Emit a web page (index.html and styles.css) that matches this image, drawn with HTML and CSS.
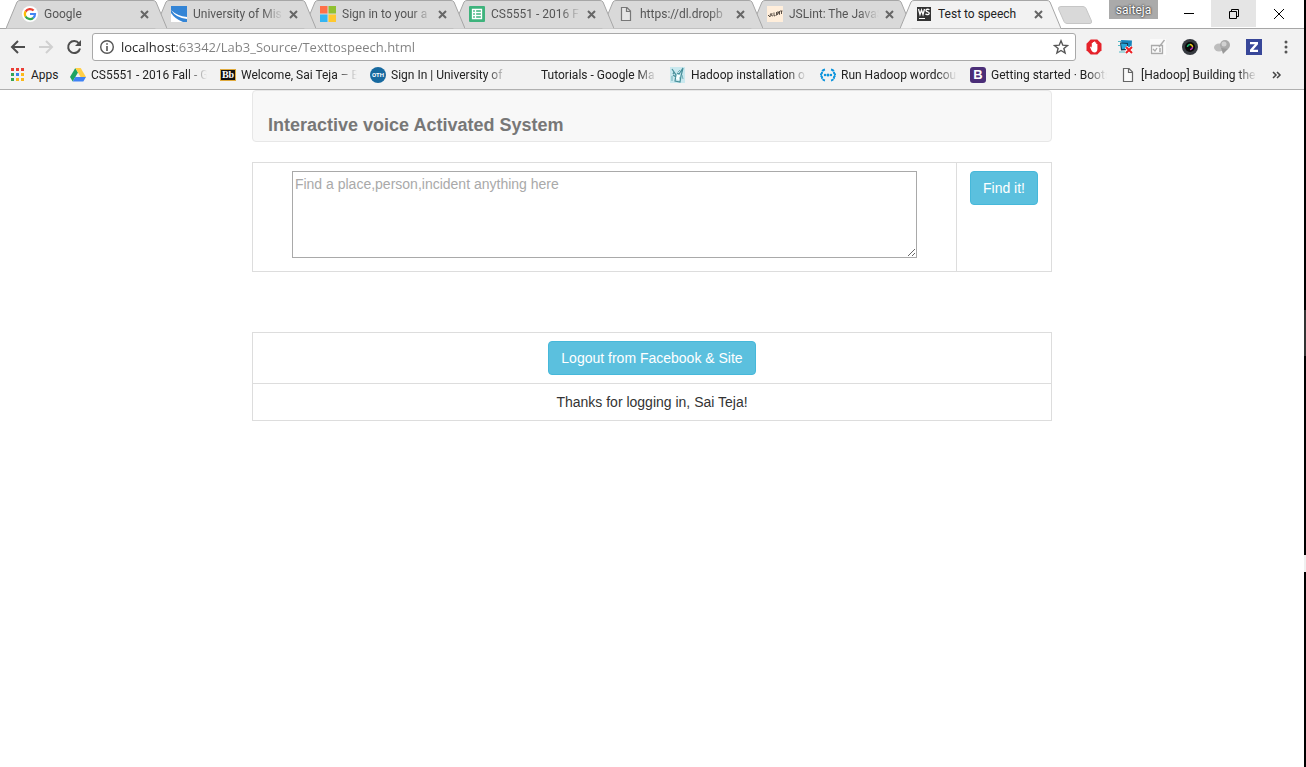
FILE: index.html
```
<!DOCTYPE html>
<html lang="en">
<head>
<meta charset="utf-8">
<title>Test to speech</title>
<link rel="stylesheet" href="styles.css">
</head>
<body>
<div class="window">
<header class="chrome">
  <div class="tabstrip">
    <nav class="tabs" aria-label="Tabs">
      <div class="tab">
        <svg class="tab-shape" viewBox="0 0 161 29" preserveAspectRatio="none"><path d="M0 28.5 L11 2 Q12 .5 14 .5 H147 Q149 .5 150 2 L161 28.5"/></svg>
        <svg class="icon" viewBox="0 0 16 16"><circle cx="8" cy="8" r="8" fill="#fff"/><g fill="none" stroke-width="2.2"><path d="M3.6 5.6A5 5 0 0 1 11.6 4.6" stroke="#ea4335"/><path d="M3.6 5.4A5 5 0 0 0 3.6 10.6" stroke="#fbbc05"/><path d="M3.6 10.4A5 5 0 0 0 11.3 11.8" stroke="#34a853"/><path d="M8 8H13A5 5 0 0 1 11.2 11.9" stroke="#4285f4"/></g></svg>
        <a class="tab-title" href="#">Google</a>
        <button class="tab-close" aria-label="Close Google"><svg viewBox="0 0 9 9"><path d="M1 1L8 8M8 1L1 8"/></svg></button>
      </div>
      <div class="tab">
        <svg class="tab-shape" viewBox="0 0 161 29" preserveAspectRatio="none"><path d="M0 28.5 L11 2 Q12 .5 14 .5 H147 Q149 .5 150 2 L161 28.5"/></svg>
        <svg class="icon" viewBox="0 0 16 16"><path d="M0 0H16V16H0z" fill="#3485d6"/><path d="M0 4Q6 10 16 11V13Q5 12 0 4z" fill="#fff"/><path d="M0 7Q4 13 12 16H0z" fill="#fff"/></svg>
        <a class="tab-title" href="#">University of Mis</a>
        <button class="tab-close" aria-label="Close University of Missouri"><svg viewBox="0 0 9 9"><path d="M1 1L8 8M8 1L1 8"/></svg></button>
      </div>
      <div class="tab">
        <svg class="tab-shape" viewBox="0 0 161 29" preserveAspectRatio="none"><path d="M0 28.5 L11 2 Q12 .5 14 .5 H147 Q149 .5 150 2 L161 28.5"/></svg>
        <svg class="icon" viewBox="0 0 16 16"><path d="M0 0H7.5V7.5H0z" fill="#ff7048"/><path d="M8.5 0H16V7.5H8.5z" fill="#91c130"/><path d="M0 8.500H7.5V16H0z" fill="#34b5f2"/><path d="M8.500 8.500H16V16H8.500z" fill="#ffc82e"/></svg>
        <a class="tab-title" href="#">Sign in to your a</a>
        <button class="tab-close" aria-label="Close Sign in"><svg viewBox="0 0 9 9"><path d="M1 1L8 8M8 1L1 8"/></svg></button>
      </div>
      <div class="tab">
        <svg class="tab-shape" viewBox="0 0 161 29" preserveAspectRatio="none"><path d="M0 28.5 L11 2 Q12 .5 14 .5 H147 Q149 .5 150 2 L161 28.5"/></svg>
        <svg class="icon" viewBox="0 0 16 16"><rect width="16" height="16" rx="1" fill="#3eb37c"/><path d="M3.500 3.500H12.500V12.500H3.500zM3.500 6.500H12.500M3.500 9.500H12.500M6.500 3.500V12.500" fill="none" stroke="#fff" stroke-width="1.300"/></svg>
        <a class="tab-title" href="#">CS5551 - 2016 F</a>
        <button class="tab-close" aria-label="Close CS5551"><svg viewBox="0 0 9 9"><path d="M1 1L8 8M8 1L1 8"/></svg></button>
      </div>
      <div class="tab">
        <svg class="tab-shape" viewBox="0 0 161 29" preserveAspectRatio="none"><path d="M0 28.5 L11 2 Q12 .5 14 .5 H147 Q149 .5 150 2 L161 28.5"/></svg>
        <svg class="icon" viewBox="0 0 16 16"><path d="M3.500 1.500H9L12.500 5V14.500H3.500zM8.500 1.500V5.500H12.500" fill="#e6e6e6" stroke="#777" stroke-width="1.200"/></svg>
        <a class="tab-title" href="#">https://dl.dropb</a>
        <button class="tab-close" aria-label="Close dropbox"><svg viewBox="0 0 9 9"><path d="M1 1L8 8M8 1L1 8"/></svg></button>
      </div>
      <div class="tab">
        <svg class="tab-shape" viewBox="0 0 161 29" preserveAspectRatio="none"><path d="M0 28.5 L11 2 Q12 .5 14 .5 H147 Q149 .5 150 2 L161 28.5"/></svg>
        <svg class="icon" viewBox="0 0 16 16"><path d="M0 0H16V16H0z" fill="#ffeedb"/><path d="M1 9L3 11L3.500 7.500M5 7L4.500 9.500L6 10M7 6.500V10L8.500 9.500M9.500 6V9.500M10.500 9L11 5.500L12.500 8.500V5M13 5H15.500M14.500 5V8" fill="none" stroke="#4a4038" stroke-width=".9"/></svg>
        <a class="tab-title" href="#">JSLint: The JavaS</a>
        <button class="tab-close" aria-label="Close JSLint"><svg viewBox="0 0 9 9"><path d="M1 1L8 8M8 1L1 8"/></svg></button>
      </div>
      <div class="tab tab-active">
        <svg class="tab-shape" viewBox="0 0 161 29" preserveAspectRatio="none"><path d="M0 28.5 L11 2 Q12 .5 14 .5 H147 Q149 .5 150 2 L161 28.5"/></svg>
        <svg class="icon" viewBox="0 0 16 16"><path d="M1 1H15V15H1z" fill="#343434"/><path d="M2.500 3L4 8.500L5.500 4L7 8.500L8.500 3M13.300 4Q12.800 3.200 11.500 3.200Q9.900 3.300 10 4.500Q10.200 5.500 11.700 5.800Q13.400 6.200 13.200 7.500Q12.800 8.700 11.300 8.600Q10 8.500 9.600 7.700" fill="none" stroke="#fff" stroke-width="1.300"/><path d="M3 12H9V13H3z" fill="#fff"/></svg>
        <a class="tab-title" href="#">Test to speech</a>
        <button class="tab-close" aria-label="Close Test to speech"><svg viewBox="0 0 9 9"><path d="M1 1L8 8M8 1L1 8"/></svg></button>
      </div>
    </nav>
    <button class="new-tab" aria-label="New tab"><svg viewBox="0 0 36 18"><path d="M4 .500H26Q28 .500 29 2.500L34.500 15Q35 17.500 33 17.500H10Q8 17.500 7 15.500L1.500 3Q1 .500 4 .500z" fill="#d9d9d9" stroke="#c6c6c6"/></svg></button>
    <div class="window-buttons">
      <button class="profile">saiteja</button>
      <button class="win-btn" aria-label="Minimize"><svg viewBox="0 0 12 12"><path d="M1 5.500H11"/></svg></button>
      <button class="win-btn win-hover" aria-label="Restore"><svg viewBox="0 0 12 12"><path d="M1.500 3.500H8.500V10.500H1.500zM3.500 3.500V1.500H10.500V8.500H8.500"/></svg></button>
      <button class="win-btn" aria-label="Close"><svg viewBox="0 0 12 12"><path d="M1 1L11 11M11 1L1 11"/></svg></button>
    </div>
  </div>

  <div class="toolbar">
    <button class="tool" aria-label="Back"><svg viewBox="0 0 16 16"><path d="M15 8H2.500M8 2L2 8L8 14" fill="none" stroke="#4d4d4d" stroke-width="2"/></svg></button>
    <button class="tool" aria-label="Forward"><svg viewBox="0 0 16 16"><path d="M1 8H13.500M8 2L14 8L8 14" fill="none" stroke="#d0d0d0" stroke-width="2"/></svg></button>
    <button class="tool" aria-label="Reload"><svg viewBox="0 0 16 16"><path d="M13 4.500A6 6 0 1 0 14 9.500" fill="none" stroke="#4d4d4d" stroke-width="2"/><path d="M15 1V7H9z" fill="#4d4d4d"/></svg></button>
    <div class="omnibox">
      <svg class="icon" viewBox="0 0 16 16"><circle cx="8" cy="8" r="6.300" fill="none" stroke="#555" stroke-width="1.400"/><path d="M7.200 7H8.800V12H7.200zM7.200 4.200H8.800V5.800H7.200z" fill="#555"/></svg>
      <input class="address" type="text" aria-label="Address" value="localhost:63342/Lab3_Source/Texttospeech.html">
      <button class="star" aria-label="Bookmark this page"><svg class="icon" viewBox="0 0 16 16"><path d="M8 1.800L9.800 6.200L14.500 6.500L10.900 9.500L12.100 14L8 11.500L3.900 14L5.100 9.500L1.500 6.500L6.200 6.200z" fill="none" stroke="#555" stroke-width="1.400"/></svg></button>
    </div>
    <div class="extensions">
      <button class="ext" aria-label="AdBlock"><svg viewBox="0 0 16 16"><path d="M4.700 .5H11.300L15.500 4.700V11.300L11.300 15.500H4.700L.5 11.300V4.700z" fill="#e5222a"/><path d="M4 8L5.200 7.500L5.800 9V4H6.800V7V3H8V7V2.500H9.200V7V3.500H10.300V7.500V5H11.400V10Q11.300 13.300 8.500 13.500Q6.500 13.300 5.500 11.500z" fill="#fff"/></svg></button>
      <button class="ext" aria-label="Connection"><svg viewBox="0 0 16 16"><path d="M3 1L14 1.500L13.500 9L4 10z" fill="#1684bd"/><path d="M2 3.500L10 4L10 11L3 11.500z" fill="#113e59"/><path d="M3 4.500L9 5L9 9.500L4 10z" fill="#27a7dc"/><path d="M0 2.500H3M0 6.500H2M1 13H8" stroke="#52bac6"/><path d="M8 8L14 14M14 8L8 14" stroke="#fff" stroke-width="3.500"/><path d="M8 8L14 14M14 8L8 14" stroke="#ec2024" stroke-width="2"/></svg></button>
      <button class="ext" aria-label="Form editor"><svg viewBox="0 0 16 16"><path d="M0 0H16V16H0z" fill="#fafafa"/><path d="M1.500 6.500H12.500V14.500H1.500zM3 10L5 12L7 9M9 10H11M9 12H11M14.500 1L9 8" fill="none" stroke="#aaa" stroke-width="1.300"/></svg></button>
      <button class="ext" aria-label="Camera"><svg viewBox="0 0 16 16"><circle cx="8" cy="8" r="8" fill="#363a40"/><circle cx="8" cy="8" r="5" fill="#080808"/><g fill="none" stroke-width="1.500"><path d="M5.500 8A2.500 2.500 0 0 1 8 5.500" stroke="#1bb66d"/><path d="M8 5.500A2.500 2.500 0 0 1 10.500 8" stroke="#eacb21"/><path d="M10.500 8A2.500 2.500 0 0 1 8 10.500" stroke="#c237b5"/></g></svg></button>
      <button class="ext" aria-label="Cloud"><svg viewBox="0 0 16 16"><ellipse cx="5" cy="8.500" rx="5" ry="4" fill="#bdbdbd"/><circle cx="11" cy="6" r="5" fill="#aaa"/><path d="M7 9L14 10L9 15z" fill="#999"/><circle cx="10" cy="5" r="2.500" fill="#d1d1d1"/></svg></button>
      <button class="ext" aria-label="Zotero"><svg viewBox="0 0 16 16"><path d="M0 0H16V16H0z" fill="#384799"/><path d="M4 3H12V5.300L7.200 10.700H12V13H4V10.800L8.900 5.300H4z" fill="#fff"/></svg></button>
      <button class="ext" aria-label="Menu"><svg viewBox="0 0 16 16" fill="#555"><circle cx="8" cy="3" r="1.500"/><circle cx="8" cy="8" r="1.500"/><circle cx="8" cy="13" r="1.500"/></svg></button>
    </div>
  </div>

  <nav class="bookmarks" aria-label="Bookmarks">
    <a class="bookmark apps" href="#"><svg class="icon" viewBox="0 0 16 16"><path d="M1 1h3v3H1zM6 1h3v3H6zM11 1h3v3h-3z" fill="#ea3d35"/><path d="M1 6h3v3H1z" fill="#36a454"/><path d="M6 6h3v3H6z" fill="#3b83ec"/><path d="M11 6h3v3h-3z" fill="#fbb91a"/><path d="M1 11h3v3H1z" fill="#36a454"/><path d="M6 11h3v3H6zM11 11h3v3h-3z" fill="#fbb91a"/></svg><span>Apps</span></a>
    <a class="bookmark" href="#"><svg class="icon" viewBox="0 0 16 16"><path d="M5.300 1L0 10L2.700 14.500L8 5.500z" fill="#1da362"/><path d="M5.300 1H10.700L16 10H10.600z" fill="#ffcf48"/><path d="M5.300 10H16L13.300 14.500H2.700z" fill="#3f82f5"/></svg><span class="bookmark-name">CS5551 - 2016 Fall - G</span></a>
    <a class="bookmark" href="#"><span class="icon badge-bb">Bb</span><span class="bookmark-name">Welcome, Sai Teja – Bl</span></a>
    <a class="bookmark" href="#"><span class="icon badge-oth">OTH</span><span class="bookmark-name">Sign In | University of</span></a>
    <a class="bookmark" href="#"><span class="icon"></span><span class="bookmark-name">Tutorials - Google Ma</span></a>
    <a class="bookmark" href="#"><svg class="icon" viewBox="0 0 16 16"><path d="M0 0H15V16H0z" fill="#c9e8ee"/><path d="M2 2L6 8L5 14L10 15L11 9L13 1L9 7L7 6M3 8L6 10M7 10L10 11M4 5L3 7" fill="none" stroke="#458e99" stroke-width="1.200"/><path d="M7 8L10 8L9 13L6 12z" fill="#f5ffff"/><path d="M2 9V14M12 8L13 12M10 3L8 5" stroke="#6fb0b8"/></svg><span class="bookmark-name">Hadoop installation o</span></a>
    <a class="bookmark" href="#"><svg class="icon" viewBox="0 0 16 16"><g fill="none" stroke="#0c94dd" stroke-width="2"><path d="M5 2.500Q2 3 2 6L.5 8L2 10Q2 13 5 13.500" stroke-dasharray="3.500 .6"/><path d="M11 2.500Q14 3 14 6L15.500 8L14 10Q14 13 11 13.500" stroke-dasharray="3.500 .6"/></g><g fill="#0c94dd"><circle cx="5" cy="8" r="1.200"/><circle cx="8" cy="8" r="1.500"/><circle cx="11" cy="8" r="1.200"/></g></svg><span class="bookmark-name">Run Hadoop wordcou</span></a>
    <a class="bookmark" href="#"><span class="icon badge-b">B</span><span class="bookmark-name">Getting started · Boots</span></a>
    <a class="bookmark" href="#"><svg class="icon" viewBox="0 0 16 16"><path d="M3.500 1.500H9L12.500 5V14.500H3.500zM8.500 1.500V5.500H12.500" fill="#fafafa" stroke="#666" stroke-width="1.200"/></svg><span class="bookmark-name">[Hadoop] Building the</span></a>
    <button class="more" aria-label="More bookmarks"><svg viewBox="0 0 10 8"><path d="M1 1L4 4L1 7M5 1L8 4L5 7" fill="none" stroke="#444" stroke-width="1.500"/></svg></button>
  </nav>
</header>

<main class="page">
  <div class="navbar"><h1 class="brand">Interactive voice Activated System</h1></div>
  <table class="grid search">
    <tr>
      <td><textarea class="query" aria-label="Search" placeholder="Find a place,person,incident anything here"></textarea></td>
      <td class="action"><button class="btn">Find it!</button></td>
    </tr>
  </table>
  <table class="grid">
    <tr><td><button class="btn">Logout from Facebook &amp; Site</button></td></tr>
    <tr><td>Thanks for logging in, Sai Teja!</td></tr>
  </table>
</main>
</div>
<div class="edge"><i class="edge-dark"></i><i class="edge-gray"></i><i class="edge-mid"></i><i class="edge-light"></i></div>
</body>
</html>
```
FILE: styles.css
```
* { box-sizing: border-box; }
body {
  margin: 0;
  min-height: 100vh;
  display: flex;
  background: #fff;
  color: #333;
  font: 14px/20px "Liberation Sans", Arial, sans-serif;
}
button { border: 0; padding: 0; background: none; font: inherit; color: inherit; }
a { color: inherit; text-decoration: none; }
svg { display: block; flex: none; }
.window { flex: 1; min-width: 0; }
.icon { width: 16px; height: 16px; flex: none; }

.chrome {
  background: #f2f2f2;
  border-bottom: 1px solid #b0b0b0;
  color: #222;
  font: 12px/16px Roboto, "Open Sans", sans-serif;
}
.tabstrip {
  display: flex;
  height: 29px;
  padding-left: 6px;
  background: #fff;
  border-bottom: 1px solid #a6a6a6;
}
.tabs { display: flex; flex: 0 1 1043px; min-width: 0; isolation: isolate; }
.tab {
  position: relative;
  display: flex;
  align-items: center;
  flex: 1 1 0;
  min-width: 0;
  height: 29px;
  padding-left: 16px;
  border-bottom: 1px solid #a6a6a6;
  color: #555;
}
.tab:nth-child(1) { z-index: 6; }
.tab:nth-child(2) { z-index: 5; }
.tab:nth-child(3) { z-index: 4; }
.tab:nth-child(4) { z-index: 3; }
.tab:nth-child(5) { z-index: 2; }
.tab:nth-child(6) { z-index: 1; }
.tab-active { z-index: 7; color: #222; border-bottom-color: transparent; }
.tab-shape {
  position: absolute;
  z-index: -1;
  top: 0;
  left: 0;
  width: calc(100% + 12px);
  height: 29px;
  fill: #d9d9d9;
  stroke: #a6a6a6;
}
.tab-active .tab-shape { fill: #f2f2f2; }
.tab-title {
  flex: 1;
  min-width: 0;
  margin-left: 6px;
  overflow: hidden;
  white-space: nowrap;
}
.tab:not(.tab-active) .tab-title, .bookmark-name {
  mask-image: linear-gradient(to left, transparent, #000 20px);
}
.tab-close { width: 9px; height: 9px; margin: 0 6px; }
.tab-close svg { width: 9px; height: 9px; stroke: #666; stroke-width: 2; }
.new-tab { align-self: center; margin: 2px 0 0 8px; }
.new-tab svg { width: 36px; height: 18px; }
.window-buttons { display: flex; align-items: flex-start; margin-left: auto; padding-right: 3px; }
.profile {
  width: 49px;
  height: 19px;
  margin-right: 8px;
  background: #aaa;
  color: #fff;
  text-shadow: 0 0 2px #333, 0 0 2px #333;
}
.win-btn { width: 45px; height: 27px; display: grid; place-items: center; }
.win-hover { background: #e5e5e5; }
.win-btn svg { width: 12px; height: 12px; fill: none; stroke: #000; }

.toolbar { display: flex; align-items: center; gap: 12px; padding: 4px 10px; }
.tool svg, .ext svg { width: 16px; height: 16px; }
.omnibox {
  flex: 1;
  min-width: 0;
  display: flex;
  align-items: center;
  gap: 6px;
  height: 28px;
  margin: 0 -2px;
  padding: 0 6px;
  background: #fff;
  border: 1px solid #a9a9a9;
  border-radius: 3px;
}
.address {
  flex: 1;
  min-width: 0;
  padding: 0;
  border: 0;
  outline: 0;
  font: 13px/20px "Open Sans", "Noto Sans", sans-serif;
  color: transparent;
  background: linear-gradient(to right, #222 56px, #808080 56px);
  background-clip: text;
}
.extensions { display: flex; gap: 16px; }

.bookmarks { display: flex; align-items: center; gap: 13px; height: 24px; padding: 0 22px 5px 10px; }
.bookmark { display: flex; align-items: center; gap: 5px; flex: 0 1 137px; min-width: 0; color: #222; }
.apps { flex: 0 0 47px; }
.bookmark-name { flex: 1; min-width: 0; overflow: hidden; white-space: nowrap; }
.more { margin-left: 2px; }
.more svg { width: 10px; height: 8px; }
.badge-bb, .badge-oth, .badge-b { display: grid; place-items: center; color: #fff; font-weight: 700; }
.badge-bb { height: 12px; background: #111; border: 1px solid #e0aa3c; font: bold 10px/10px "Liberation Serif", serif; }
.badge-oth { border-radius: 50%; background: #17699f; font-size: 6px; }
.badge-b { border-radius: 3px; background: #4b2e78; font-family: "Liberation Sans", Arial, sans-serif; font-size: 13px; }

.page { max-width: 800px; margin: 0 auto; }
.navbar {
  min-height: 52px;
  margin-bottom: 20px;
  padding: 24px 15px 6px;
  background: #f8f8f8;
  border: 1px solid #e7e7e7;
  border-radius: 4px;
}
.brand { margin: 0; color: #777; font-size: 18px; line-height: 20px; }
.grid { width: 100%; border-collapse: collapse; }
.grid td { padding: 8px; border: 1px solid #ddd; text-align: center; vertical-align: top; }
.search { margin-bottom: 60px; }
.grid .action { width: 95px; }
.query {
  display: block;
  width: 91%;
  height: 87px;
  margin: 0 auto 5px;
  padding: 2px;
  border: 1px solid #a9a9a9;
  font: inherit;
  color: #333;
}
.query::placeholder { color: #a9a9a9; }
.btn {
  padding: 6px 12px;
  border: 1px solid #46b8da;
  border-radius: 4px;
  background: #5bc0de;
  color: #fff;
  vertical-align: middle;
}

.edge { flex: 0 0 2px; display: flex; flex-direction: column; background: #000; }
.edge-dark { height: 310px; }
.edge-gray { height: 46px; background: #333; }
.edge-mid { height: 199px; }
.edge-light { height: 17px; background: #f0f0f0; }
```
